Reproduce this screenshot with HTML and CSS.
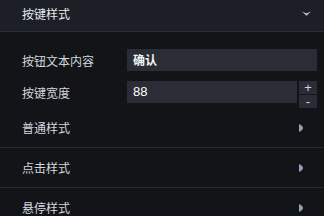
FILE: index.html
```html
<!DOCTYPE html>
<html lang="zh-CN">
<head>
    <meta charset="UTF-8">
    <link rel="stylesheet" href="styles.css">
    <title>按键样式</title>
</head>
<body>
    <div class="panel-head">
        <span>按键样式</span>
        <svg class="caret-down" width="9" height="5" viewBox="0 0 9 5"><path d="M0 0.5 L4.5 2.5 L9 0.5 L4.5 4.8 Z" fill="#c4ccd9"/></svg>
    </div>

    <div class="form">
        <div class="form-row">
            <label>按钮文本内容</label>
            <div class="field">确认</div>
        </div>
        <div class="form-row">
            <label>按键宽度</label>
            <div class="field num">88</div>
            <div class="stepper">
                <span class="step">+</span>
                <span class="step">-</span>
            </div>
        </div>
    </div>

    <div class="item">
        <span>普通样式</span>
        <svg class="caret-right" width="4" height="8" viewBox="0 0 4 8"><path d="M0 0 Q4 2 4 4 Q4 6 0 8 Z" fill="#93a2b8"/></svg>
    </div>
    <div class="item">
        <span>点击样式</span>
        <svg class="caret-right" width="4" height="8" viewBox="0 0 4 8"><path d="M0 0 Q4 2 4 4 Q4 6 0 8 Z" fill="#93a2b8"/></svg>
    </div>
    <div class="item">
        <span>悬停样式</span>
        <svg class="caret-right" width="4" height="8" viewBox="0 0 4 8"><path d="M0 0 Q4 2 4 4 Q4 6 0 8 Z" fill="#93a2b8"/></svg>
    </div>
</body>
</html>
```

FILE: styles.css
```css
body {
    margin: 0;
    height: 216px;
    background-color: #121418;
    color: #d3d7de;
    font-family: 'Noto Sans CJK SC', 'Noto Sans', sans-serif;
    font-size: 12px;
    overflow: hidden;
}

.panel-head {
    display: flex;
    align-items: center;
    justify-content: space-between;
    height: 27px;
    padding: 0 13px 4px 22px;
    background-color: #1c1f26;
    border-bottom: 1px solid #2a2d33;
    color: #e6e9ee;
}

.form {
    padding: 17px 7px 5px 22px;
}

.form-row {
    display: flex;
    align-items: center;
    height: 22px;
    margin-bottom: 10px;
}

.form-row:last-child {
    margin-bottom: 0;
}

label {
    width: 105px;
    flex-shrink: 0;
}

.field {
    flex: 1;
    height: 22px;
    line-height: 22px;
    padding-left: 6px;
    background-color: #2a2d35;
    color: #f4f6f9;
    font-weight: bold;
}

.field.num {
    font-family: 'Liberation Sans', Arial, sans-serif;
    font-size: 13px;
    font-weight: normal;
    color: #ffffff;
}

.stepper {
    display: flex;
    flex-direction: column;
    width: 18px;
    height: 22px;
    margin-left: 2px;
}

.step {
    flex: 1;
    display: flex;
    align-items: center;
    justify-content: center;
    background-color: #2a2d35;
    color: #d0d5de;
    font-family: 'Liberation Sans', Arial, sans-serif;
    font-size: 13px;
    line-height: 1;
}

.step + .step {
    border-top: 1px solid #15171b;
}

.item {
    display: flex;
    align-items: center;
    justify-content: space-between;
    height: 39px;
    padding: 0 21px 0 22px;
    border-bottom: 1px solid #26292e;
}
```
